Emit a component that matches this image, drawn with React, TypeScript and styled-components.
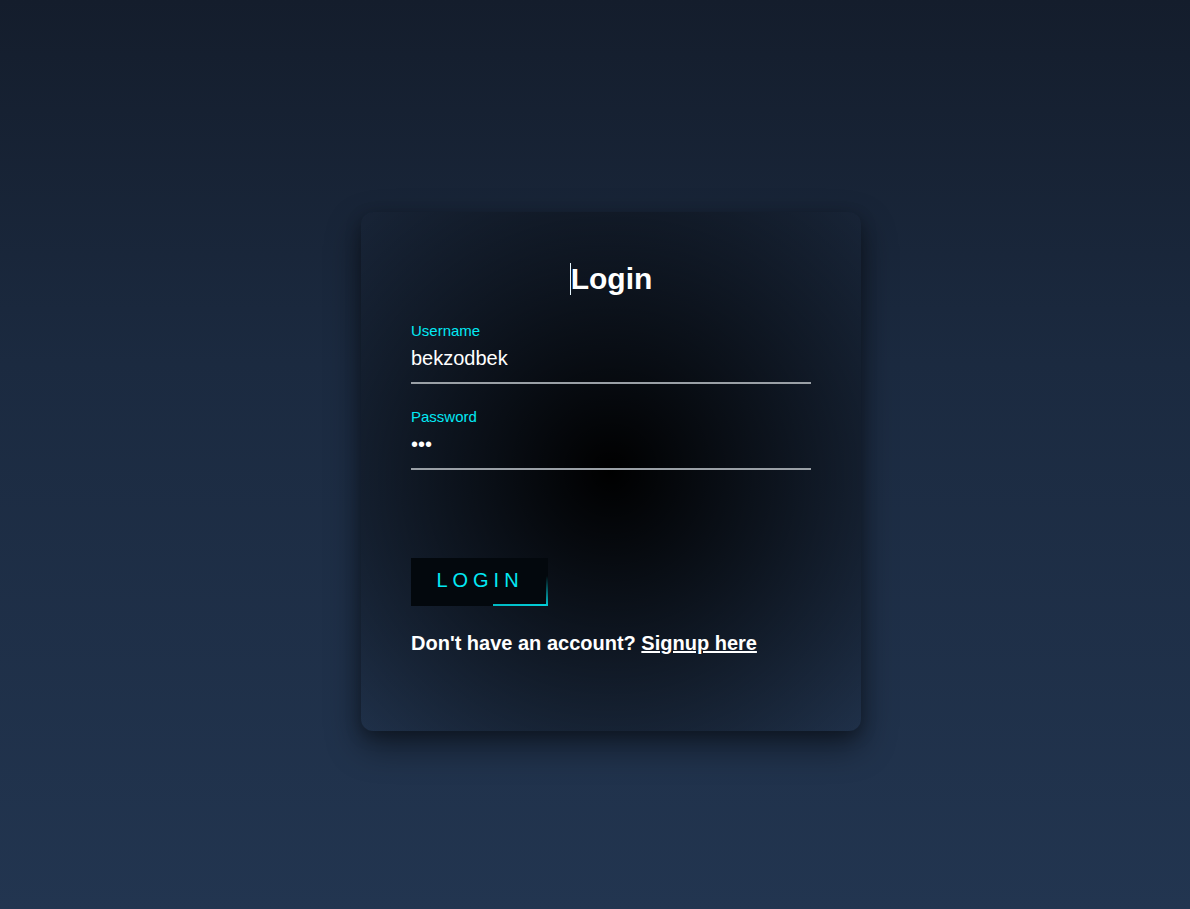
import React from "react";
import styled, { createGlobalStyle } from "styled-components";

const Global = createGlobalStyle`
  html, body { margin: 0; padding: 0; height: 100%; }
  body {
    font-family: "Liberation Sans", Arial, sans-serif;
    background: linear-gradient(180deg, #141d2c 0%, #1b2a40 40%, #223550 100%);
    min-height: 909px;
  }
  #root { min-height: 909px; }
`;

const Page = styled.main`
  display: flex;
  justify-content: center;
  padding: 212px 0 0 32px;
  min-height: 909px;
  box-sizing: border-box;
`;

const Card = styled.form`
  width: 500px;
  height: 519px;
  box-sizing: border-box;
  padding: 48px 50px 50px;
  border-radius: 12px;
  background: radial-gradient(circle at 50% 50%, rgba(0, 0, 0, 1) 0%, rgba(0, 0, 0, 0.55) 170px, rgba(0, 0, 0, 0) 370px);
  box-shadow: 0 15px 35px rgba(0, 0, 0, 0.45), 0 5px 15px rgba(0, 0, 0, 0.25);
  display: flex;
  flex-direction: column;
`;

const Title = styled.h2`
  margin: 0 0 24px;
  text-align: center;
  color: #fff;
  font-size: 30px;
  font-weight: 700;
  line-height: 38px;
`;

const Caret = styled.span`
  display: inline-block;
  width: 1px;
  height: 32px;
  background: #e8f8ff;
  vertical-align: -6px;
`;

const Field = styled.div<{ $gap: number }>`
  display: flex;
  flex-direction: column;
  margin-bottom: ${(p) => p.$gap}px;
`;

const Label = styled.label`
  color: #03e9f4;
  font-size: 15px;
  line-height: 17px;
`;

const Input = styled.input`
  height: 45px;
  box-sizing: border-box;
  padding: 6px 0 10px;
  background: transparent;
  border: none;
  border-bottom: 2px solid #9aa0a6;
  outline: none;
  color: #fff;
  font-family: "Liberation Sans", Arial, sans-serif;
  font-size: 20px;
  line-height: 23px;
`;

const Button = styled.button`
  position: relative;
  align-self: flex-start;
  width: 137px;
  height: 48px;
  border: none;
  background: #03080d;
  color: #03e9f4;
  font-family: "Liberation Sans", Arial, sans-serif;
  font-size: 20px;
  letter-spacing: 5px;
  padding: 0 0 4px 1px;
  cursor: pointer;
`;

const AccentBottom = styled.span`
  position: absolute;
  right: 0;
  bottom: 0;
  width: 55px;
  height: 2px;
  background: linear-gradient(90deg, #00b8c2, #03d0da);
`;

const AccentRight = styled.span`
  position: absolute;
  right: 0;
  bottom: 0;
  width: 2px;
  height: 30px;
  background: linear-gradient(180deg, rgba(3, 196, 207, 0), #03c4cf);
`;

const Footer = styled.p`
  margin: 25px 0 0;
  color: #fff;
  font-size: 20px;
  font-weight: 700;
  line-height: 24px;
`;

const Link = styled.a`
  color: #fff;
  text-decoration: underline;
`;

export default function App() {
  return (
    <>
      <Global />
      <Page>
        <Card onSubmit={(e) => e.preventDefault()}>
          <Title>
            <Caret />
            Login
          </Title>
          <Field $gap={24}>
            <Label>Username</Label>
            <Input type="text" defaultValue="bekzodbek" />
          </Field>
          <Field $gap={88}>
            <Label>Password</Label>
            <Input type="password" defaultValue="abc" />
          </Field>
          <Button type="submit">
            LOGIN
            <AccentBottom />
            <AccentRight />
          </Button>
          <Footer>
            Don't have an account? <Link href="#">Signup here</Link>
          </Footer>
        </Card>
      </Page>
    </>
  );
}
